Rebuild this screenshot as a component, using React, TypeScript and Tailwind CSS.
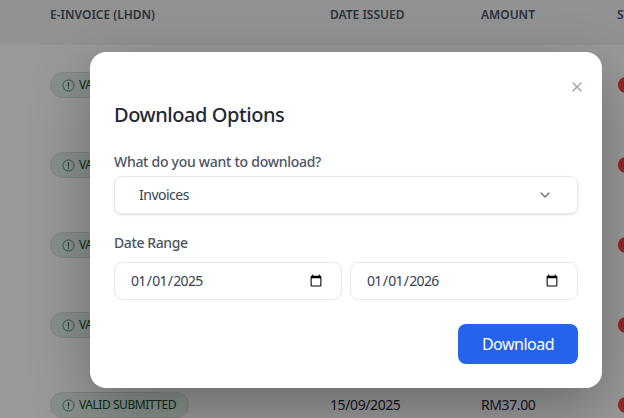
import { ChevronDown, X } from "lucide-react";

const Badge = () => (
  <div className="inline-flex h-[26px] w-[139px] items-center gap-[4px] whitespace-nowrap rounded-full border border-[#cfe3d6] bg-[#e4f1e8] pl-[11px] text-xs tracking-[-0.45px] text-[#0f5132]">
    <svg width="13" height="13" viewBox="0 0 13 13" fill="none" stroke="currentColor" className="shrink-0">
      <circle cx="6.5" cy="6.5" r="5.5" strokeWidth="0.9" strokeDasharray="1.2 0.5" />
      <path d="M6.5 3.5v3.7M6.5 8.6v1" strokeWidth="1.1" />
    </svg>
    VALID SUBMITTED
  </div>
);

const rows = [0, 1, 2, 3, 4];

const cols = "grid grid-cols-[280px_151px_136px_120px] pl-[50px]";
const inputCls = "h-[38px] w-full rounded-lg border border-[#e5e7eb] pl-[15px] pr-4 text-sm tracking-[-0.7px] text-[#374151]";

export default function App() {
  return (
    <div className="relative h-[418px] w-[624px] overflow-hidden bg-white font-['Noto_Sans',sans-serif]">
      <div className={`${cols} h-[45px] w-[800px] items-start bg-[#f3f4f6] pt-[7px] text-xs font-semibold text-[#4b5563]`}>
        <div>E-INVOICE (LHDN)</div>
        <div>DATE ISSUED</div>
        <div>AMOUNT</div>
        <div>STATUS</div>
      </div>
      {rows.map((i) => (
        <div key={i} className={`${cols} h-20 w-[800px] items-center text-sm tracking-[-0.4px] text-[#1f2937]`}>
          <div><Badge /></div>
          <div>15/09/2025</div>
          <div>RM37.00</div>
          <div className="pl-px">
            <div className="flex h-4 w-4 items-center justify-center rounded-full bg-[#ef4444]">
              <X size={9} strokeWidth={2} className="text-white/70" />
            </div>
          </div>
        </div>
      ))}

      <div className="absolute inset-0 bg-black/40 pt-[52px] pl-[90px]">
        <div className="relative h-[336px] w-[512px] rounded-2xl bg-white p-6 shadow-[0_20px_60px_rgba(0,0,0,0.3)]">
          <button className="absolute right-[17px] top-[27px] text-[#9ca3af]">
            <X size={16} strokeWidth={2} />
          </button>
          <h2 className="mt-[25px] text-xl leading-[28px] font-medium tracking-[-0.44px] text-[#1f2937]">Download Options</h2>
          <label className="mt-[23px] block text-sm leading-5 font-medium tracking-[-0.28px] text-[#4b5563]">What do you want to download?</label>
          <div className="mt-[4px] flex h-[38px] items-center justify-between rounded-lg border border-[#e5e7eb] pl-6 pr-6 text-sm tracking-[-0.5px] text-[#374151] shadow-sm">
            Invoices
            <ChevronDown size={16} className="text-[#6b7280]" />
          </div>
          <label className="mt-[19px] block text-sm leading-5 font-medium tracking-[-0.4px] text-[#4b5563]">Date Range</label>
          <div className="mt-[9px] grid grid-cols-2 gap-2">
            <input type="date" defaultValue="2025-01-01" className={inputCls} />
            <input type="date" defaultValue="2026-01-01" className={inputCls} />
          </div>
          <div className="mt-6 flex justify-end">
            <button className="h-10 w-[120px] rounded-lg bg-[#2563eb] text-base tracking-[-0.5px] text-white">Download</button>
          </div>
        </div>
      </div>
    </div>
  );
}
